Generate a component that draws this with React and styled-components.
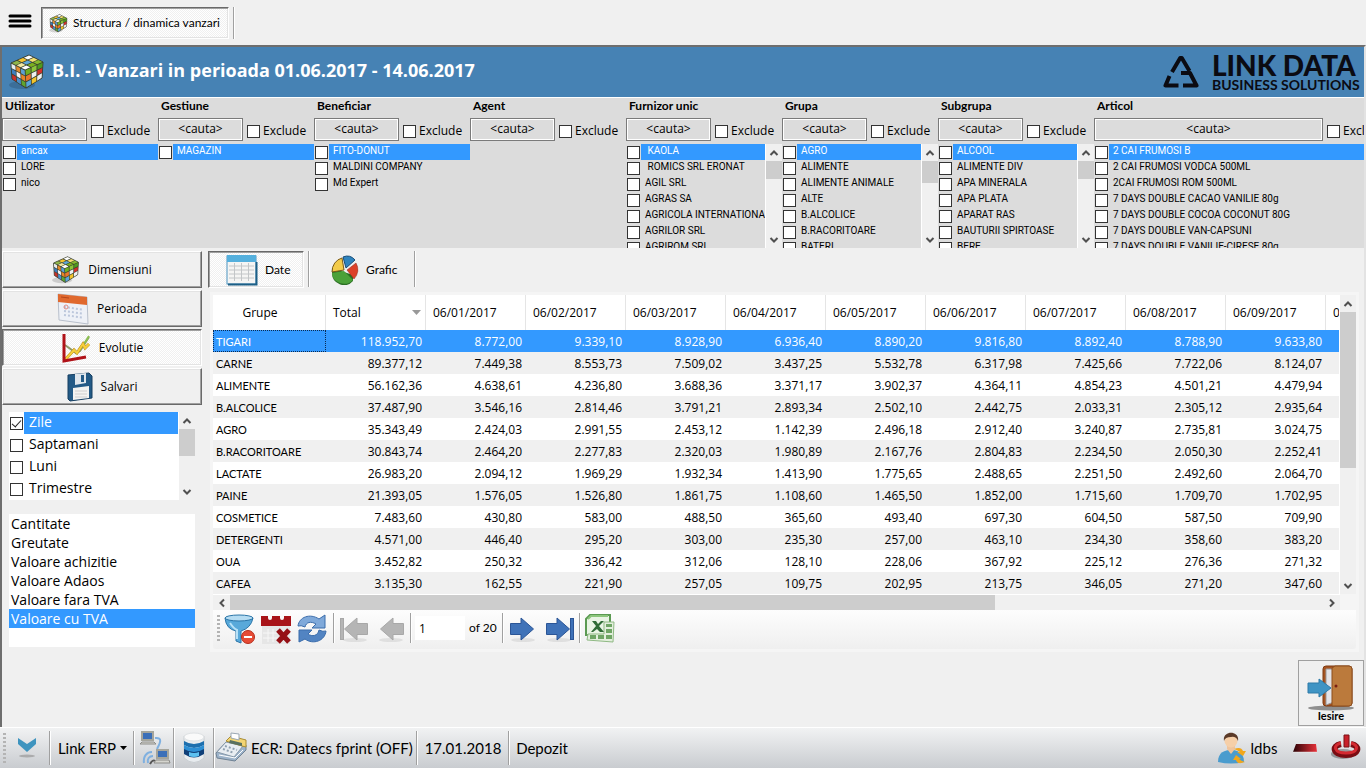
import React from "react";
import styled, { createGlobalStyle, css } from "styled-components";

const humanist = '"Lato", "Open Sans", sans-serif';
const wide = '"Open Sans", "Noto Sans", sans-serif';
const compact = '"Roboto", "Lato", sans-serif';

const GlobalStyle = createGlobalStyle`
  * { box-sizing: border-box; }
  body { margin: 0; background: #f0f0f0; color: #000; font-family: ${wide}; font-size: 12px; }
  button, input { font: inherit; color: inherit; }
  ul { list-style: none; margin: 0; padding: 0; }
  svg { display: block; flex: none; }
`;

const dither = "repeating-conic-gradient(#ffffff 0 25%, #f0f0f0 0 50%) 0 0 / 2px 2px";

const Page = styled.div`
  display: flex;
  flex-direction: column;
  height: 100vh;
  min-height: 640px;
  overflow: hidden;
`;

/* ---------- window tabs ---------- */
const TopBar = styled.nav`
  display: flex;
  align-items: flex-start;
  height: 45px;
  padding: 7px 8px;
`;
const MenuButton = styled.button`
  width: 33px;
  height: 28px;
  padding: 0;
  border: 0;
  background: none;
`;
const Sunken = css`
  background: ${dither};
  border: 1px solid #696969;
  border-right-color: #fff;
  border-bottom-color: #fff;
  box-shadow: inset 1px 1px 0 #a0a0a0, inset -1px -1px 0 #e3e3e3;
`;
const WindowTab = styled.button`
  ${Sunken}
  display: flex;
  align-items: center;
  gap: 5px;
  width: 188px;
  height: 32px;
  padding: 0 0 0 7px;
  font: 12px/16px ${humanist};
  white-space: nowrap;
`;
const Divider = styled.span`
  width: 2px;
  height: ${(p) => p.$h || 32}px;
  margin: 0 ${(p) => p.$gap || 0}px;
  flex: none;
  background: linear-gradient(90deg, #a0a0a0 50%, #fff 50%);
`;

/* ---------- main window ---------- */
const Window = styled.main`
  flex: 1;
  min-height: 0;
  display: flex;
  flex-direction: column;
  border: solid #6e6e6e;
  border-width: 2px 0 0 2px;
  border-right: 2px solid #e3e3e3;
`;
const Banner = styled.header`
  display: flex;
  align-items: center;
  height: 51px;
  flex: none;
  padding: 0 0 0 7px;
  background: #4682b4;
  border-bottom: 1px solid #fff;
  color: #fff;
`;
const Title = styled.h1`
  flex: 1;
  margin: 0 0 4px 7px;
  font: bold 18px/26px ${wide};
`;
const Brand = styled.div`
  display: flex;
  align-items: center;
  gap: 13px;
  color: #0b0b12;
  font-family: Lato, sans-serif;
  white-space: nowrap;
`;
const BrandText = styled.div`
  width: 152px;
`;
const BrandName = styled.div`
  font-size: 28px;
  line-height: 26px;
  font-weight: 900;
`;
const BrandSub = styled.div`
  font-size: 14px;
  line-height: 14px;
  font-weight: 700;
`;

const Filters = styled.section`
  display: flex;
  flex: none;
  height: 150px;
  overflow: hidden;
  background: #dcdcdc;
`;
const FilterColumn = styled.div`
  flex: ${(p) => (p.$last ? "1 0 300px" : "0 0 156px")};
  display: flex;
  flex-direction: column;
  min-width: 0;
`;
const FilterTitle = styled.h2`
  margin: 0;
  padding-left: 3px;
  font: bold 12px/16px ${humanist};
  height: 20px;
`;
const FilterTools = styled.div`
  display: flex;
  align-items: flex-start;
  height: 26px;
`;
const SearchButton = styled.button`
  flex: ${(p) => (p.$last ? "0 0 229px" : "0 0 85px")};
  height: 23px;
  padding: 0 0 2px;
  border: 1px solid #7a7a7a;
  background: #dcdcdc;
  box-shadow: inset 0 0 0 1px #fff;
  font-size: 12px;
  line-height: 16px;
`;
const ExcludeLabel = styled.label`
  display: flex;
  align-items: center;
  gap: 3px;
  height: 14px;
  margin: 6px 0 0 4px;
  font-size: 12px;
  line-height: 14px;
`;
const Check = styled.input.attrs({ type: "checkbox" })`
  appearance: none;
  flex: none;
  position: relative;
  width: 13px;
  height: 13px;
  margin: 0;
  border: 1px solid #333;
  background: #fff;
  &:checked::after {
    content: "";
    position: absolute;
    left: 3px;
    top: 0;
    width: 4px;
    height: 8px;
    border: solid #222;
    border-width: 0 1px 1px 0;
    transform: rotate(42deg);
  }
`;
const ListFrame = styled.div`
  display: flex;
  flex: 1;
  min-height: 0;
`;
const CheckList = styled.ul`
  flex: 1;
  min-width: 0;
  overflow: hidden;
`;
const CheckRow = styled.label`
  display: flex;
  align-items: center;
  gap: 1px;
  padding-left: 1px;
  height: ${(p) => (p.$big ? 22 : 16)}px;
`;
const CheckText = styled.span`
  flex: 1;
  height: 100%;
  padding-left: ${(p) => (p.$big ? 5 : 4)}px;
  overflow: hidden;
  white-space: pre;
  font-family: ${(p) => (p.$big ? wide : compact)};
  font-size: ${(p) => (p.$big ? 14 : 10)}px;
  line-height: ${(p) => (p.$big ? 20 : 14)}px;
  ${(p) => p.$on && "background: #3399ff; color: #fff;"}
`;

/* ---------- scroll bars ---------- */
const Bar = styled.div`
  display: flex;
  flex: none;
  flex-direction: ${(p) => (p.$row ? "row" : "column")};
  ${(p) => (p.$row ? "height: 16px; margin-right: 16px;" : "width: 17px;")}
  background: #f0f0f0;
  border: solid #fff;
  border-width: ${(p) => (p.$row ? "1px 0 0 0" : "0 0 0 1px")};
`;
const BarButton = styled.button`
  display: flex;
  align-items: center;
  justify-content: center;
  flex: 0 0 17px;
  padding: 0;
  border: 0;
  background: none;
`;
const Track = styled.div`
  flex: 1;
  min-height: 0;
`;
const Thumb = styled.div`
  background: #cdcdcd;
  ${(p) => (p.$row ? css`height: 100%; width: ${p.$size};` : css`width: 100%; height: ${p.$size};`)}
`;

/* ---------- work area ---------- */
const WorkArea = styled.div`
  display: flex;
  flex: 1;
  min-height: 0;
  padding: 3px 5px 0 0;
`;
const Sidebar = styled.aside`
  flex: 0 0 200px;
  display: flex;
  flex-direction: column;
  gap: 2px;
`;
const SideButton = styled.button`
  display: flex;
  align-items: center;
  justify-content: center;
  gap: 8px;
  flex: none;
  height: 37px;
  padding: 0;
  background: #f0f0f0;
  border: 1px solid #fff;
  border-right-color: #696969;
  border-bottom-color: #696969;
  box-shadow: inset -1px -1px 0 #a0a0a0, inset 1px 1px 0 #e3e3e3;
  font-size: 12px;
  ${(p) => p.$on && Sunken}
`;
const PeriodBox = styled(ListFrame)`
  flex: none;
  height: 88px;
  margin: 5px 7px 0;
  background: #fff;
`;
const MeasureList = styled.ul`
  flex: none;
  height: 133px;
  margin: 12px 7px 0;
  background: #fff;
`;
const Measure = styled.li`
  padding-left: 2px;
  font-size: 14px;
  line-height: 19px;
  ${(p) => p.$on && "background: #3399ff; color: #fff;"}
`;
const Content = styled.section`
  flex: 1;
  min-width: 0;
  display: flex;
  flex-direction: column;
  margin-left: 6px;
`;
const ViewTabs = styled.div`
  display: flex;
  flex: none;
  height: 37px;
`;
const ViewTab = styled.button`
  display: flex;
  align-items: center;
  gap: 7px;
  width: ${(p) => (p.$on ? 96 : 100)}px;
  height: 37px;
  padding: 1px 0 0 17px;
  border: 0;
  background: none;
  font: 12px/16px ${humanist};
  ${(p) => p.$on && Sunken}
`;
const Panel = styled.div`
  flex: 1;
  min-height: 0;
  display: flex;
  flex-direction: column;
  margin: 4px 0 0 2px;
  padding: 3px;
  background: #f5f5f5;
`;
const GridArea = styled.div`
  display: flex;
  flex: 1;
  min-height: 0;
`;
const GridView = styled.div`
  flex: 1;
  min-width: 0;
  overflow: hidden;
`;
const Table = styled.table`
  table-layout: fixed;
  width: 1213px;
  border-collapse: separate;
  border-spacing: 0;
  font-size: 12px;
`;
const HeadCell = styled.th`
  height: 35px;
  padding: ${(p) => (p.$first ? "0 18px 0 0" : p.$sorted ? "0 4px 0 7px" : "0 7px")};
  width: ${(p) => (p.$first ? 113 : 100)}px;
  background: #fff;
  border-right: 1px solid #e5e5e5;
  font-weight: 400;
  text-align: ${(p) => (p.$first ? "center" : "left")};
  white-space: nowrap;
`;
const HeadInner = styled.span`
  display: flex;
  align-items: center;
  justify-content: space-between;
`;
const Cell = styled.td`
  height: 22px;
  padding: 2px 4px 0 3px;
  line-height: 16px;
  text-align: right;
`;
const NameCell = styled.th`
  height: 22px;
  padding: 2px 3px 0;
  line-height: 16px;
  text-align: left;
  font-weight: 400;
  font-family: ${humanist};
  font-size: 11px;
  white-space: nowrap;
  ${(p) => p.$on && "outline: 1px dotted #0a2a50; outline-offset: -1px;"}
`;
const Row = styled.tr`
  background: #fff;
  &:nth-child(even) { background: #f0f0f0; }
  ${(p) => p.$on && "background: #3399ff; color: #fff;"}
`;
const Pager = styled.div`
  display: flex;
  align-items: flex-start;
  flex: none;
  height: 39px;
  padding: 3px 0 0 4px;
  background: linear-gradient(#fdfdfd, #efefef);
  border-radius: 0 0 3px 3px;
`;
const Grip = styled.span`
  width: 3px;
  height: ${(p) => p.$h}px;
  margin: 2px 2px 0 0;
  background: repeating-linear-gradient(#b4b4b4 0 2px, transparent 2px 4px);
`;
const ToolButton = styled.button`
  display: flex;
  align-items: center;
  justify-content: center;
  width: ${(p) => p.$w || 36}px;
  height: 32px;
  padding: 0;
  border: 0;
  background: none;
`;
const PageInput = styled.input`
  width: 50px;
  height: 24px;
  margin: 3px 0 0 3px;
  padding: 0 0 0 4px;
  border: 0;
  background: #fff;
  font-size: 12px;
`;
const PageCount = styled.span`
  width: 33px;
  margin-left: 4px;
  font: 12px/30px ${humanist};
  white-space: nowrap;
`;
const Actions = styled.footer`
  display: flex;
  justify-content: flex-end;
  flex: none;
  padding: 8px 0 1px;
`;
const ExitButton = styled.button`
  display: flex;
  flex-direction: column;
  align-items: center;
  width: 66px;
  height: 66px;
  padding: 4px 0 0;
  border: 1px solid #a0a0a0;
  background: #f0f0f0;
  font: bold 11px/10px ${humanist};
`;

/* ---------- status bar ---------- */
const StatusBar = styled.div`
  display: flex;
  align-items: center;
  flex: none;
  height: 41px;
  padding: 0 5px 0 3px;
  border-top: 1px solid #fff;
  background: linear-gradient(#f1f2f3, #c9ccd0);
  font: 15px/20px ${humanist};
  white-space: nowrap;
`;
const StatusItem = styled.span`
  display: flex;
  align-items: center;
  justify-content: ${(p) => (p.$start ? "flex-start" : "center")};
  gap: 4px;
  width: ${(p) => p.$w}px;
`;
const StatusButton = styled(StatusItem).attrs({ as: "button", type: "button" })`
  height: 36px;
  padding: 0;
  border: 0;
  background: none;
`;
const Spacer = styled.span`
  flex: 1;
`;

/* ---------- drawings ---------- */
const lerp = (a, b, t) => [a[0] + (b[0] - a[0]) * t, a[1] + (b[1] - a[1]) * t];
const faces = [
  { o: [2, 9], u: [16, 16], v: [20, 1], full: [34, 8], c: ["#8fb54a", "#f2e7a0", "#fff", "#f4c430", "#5fa8d8", "#7ab020", "#fff", "#f3e070", "#86b92c"] },
  { o: [2, 9], u: [16, 16], v: [3, 25], full: [17, 34], c: ["#e9edf0", "#e58a2c", "#5d9fd4", "#3f7fc0", "#f2f2f2", "#e98427", "#c9312b", "#4a90cf", "#5fa530"] },
  { o: [16, 16], u: [34, 8], v: [17, 34], full: [33, 24], c: ["#6fae22", "#8cc63a", "#4e9a1e", "#e8762b", "#eef0f0", "#d3302a", "#5aa5dc", "#f3c52c", "#f0f0f0"] },
];
const Cube = ({ size }) => (
  <svg width={size} height={size} viewBox="0 0 36 36" aria-hidden="true">
    <ellipse cx="13" cy="31" rx="13" ry="4" fill="#000" opacity=".15" />
    <path d="M20 1L34 8L33 24L17 34L3 25L2 9Z" fill="#3a4030" stroke="#3a4030" strokeLinejoin="round" />
    {faces.map((f, k) =>
      f.c.map((col, i) => {
        const at = (s, t) => lerp(lerp(f.o, f.u, s), lerp(f.v, f.full, s), t);
        const s = (i % 3) / 3;
        const t = Math.floor(i / 3) / 3;
        const pts = [at(s + 0.03, t + 0.03), at(s + 0.31, t + 0.03), at(s + 0.31, t + 0.31), at(s + 0.03, t + 0.31)];
        return <polygon key={k + "-" + i} points={pts.map((p) => p.join(",")).join(" ")} fill={col} />;
      })
    )}
  </svg>
);
const MenuIcon = () => (
  <svg width="24" height="16" viewBox="0 0 24 16" aria-hidden="true">
    <path d="M2 3h20M2 8h20M2 13h20" stroke="#000" strokeWidth="3" strokeLinecap="round" />
  </svg>
);
const LogoMark = () => (
  <svg width="36" height="34" viewBox="0 0 36 34" aria-hidden="true" fill="none" stroke="#0b0b12" strokeWidth="4" strokeLinejoin="round">
    <path d="M9 17L17.200 3H18.800L26.500 16" />
    <path d="M18 18H27L33.500 30.500H20" />
    <path d="M6.500 21L2.500 30.500H15.500" />
  </svg>
);
const Chevron = ({ dir }) => (
  <svg width="10" height="10" viewBox="0 0 10 10" aria-hidden="true" style={{ transform: `rotate(${dir}deg)` }}>
    <path d="M1.500 7L5 3.500L8.500 7" fill="none" stroke="#505050" strokeWidth="2" />
  </svg>
);
const PeriodIcon = () => (
  <svg width="32" height="32" viewBox="0 0 32 32" aria-hidden="true">
    <path d="M1 1L30 4L31 31L2 27Z" fill="#eef1f7" stroke="#b9c0cc" />
    <path d="M1 1L30 4V12L1 9Z" fill="#e0692e" />
    <path d="M4 4L12 5" stroke="#b5461a" />
    <path d="M7 14L25 16.500M7 18L25 20.500M7 22L25 24.500" stroke="#bcc7dc" strokeWidth="2" strokeDasharray="2 2" />
    <circle cx="9" cy="14" r="2" fill="none" stroke="#e08a80" />
  </svg>
);
const TrendIcon = () => (
  <svg width="30" height="30" viewBox="0 0 30 30" aria-hidden="true" fill="none">
    <path d="M4 12L15 20L19 18L28 4" stroke="#8f9a68" strokeWidth="2" />
    <path d="M19 17L28 3" stroke="#8cc152" strokeWidth="2" />
    <path d="M4 27L13 17L16 20L22 11L24 15L28 11" stroke="#b98c1c" strokeWidth="3" />
    <path d="M4 27L13 17L16 20L22 11L24 15L28 11" stroke="#f6cf3c" strokeWidth="2" />
    <path d="M3 1V28L25 24" stroke="#b01218" strokeWidth="3" />
  </svg>
);
const DiskIcon = () => (
  <svg width="26" height="30" viewBox="0 0 26 30" aria-hidden="true">
    <path d="M1 3L22 1L25 4V26L3 29L1 27Z" fill="#235a86" stroke="#173f61" />
    <path d="M8 2L19 1V11L8 13Z" fill="#dfe6ec" />
    <path d="M14 3L17 3V10L14 10Z" fill="#235a86" />
    <path d="M6 16L22 14V26L6 28Z" fill="#f3f3f1" />
    <path d="M8 19h12M8 22h12M8 25h12" stroke="#cfcfcf" />
  </svg>
);
const SheetIcon = () => (
  <svg width="32" height="32" viewBox="0 0 32 32" aria-hidden="true">
    <rect x="1" y="2" width="29" height="28" fill="#f5f5f4" stroke="#4d94c0" />
    <rect x="1" y="1" width="29" height="7" fill="#55b0dd" />
    <path d="M3 12h25M3 16h25M3 20h25M3 24h25M8.500 9v18M15.500 9v18M22.500 9v18" stroke="#c3c6c8" />
    <path d="M30.500 8V30.500H2" stroke="#1d5f86" strokeWidth="2" fill="none" />
  </svg>
);
const PieIcon = () => (
  <svg width="28" height="30" viewBox="0 0 28 30" aria-hidden="true">
    <path d="M1 13V18A12 12 0 0 0 22 26V20Z" fill="#2b6e24" />
    <path d="M13 15L1 17A13 14 0 0 1 11 3Z" fill="#f3cb49" stroke="#7a5a18" />
    <path d="M13 16L1 18A12 11 0 0 0 22 25Z" fill="#4ba139" />
    <path d="M16 15L25 8A13 13 0 0 1 23 24Z" fill="#dc4129" stroke="#8e2416" strokeWidth=".5" />
    <path d="M15 13L12 2Q19 -1 24 5Z" fill="#2f83bd" stroke="#174d78" />
  </svg>
);
const SortArrow = () => (
  <svg width="9" height="5" viewBox="0 0 9 5" aria-hidden="true"><path d="M0 0H9L4.500 5Z" fill="#999" /></svg>
);
const FilterOffIcon = () => (
  <svg width="32" height="32" viewBox="0 0 32 32" aria-hidden="true">
    <path d="M1 5Q2 16 12 18V28L17 30V18Q27 15 29 5Z" fill="#58a9da" stroke="#2a75a8" />
    <path d="M6 10Q10 16 13 17V26" stroke="#b7e1f7" strokeWidth="2" fill="none" />
    <ellipse cx="15" cy="5" rx="14" ry="3" fill="#b5dcf2" stroke="#2a75a8" />
    <circle cx="24" cy="24" r="6.500" fill="#e64b35" stroke="#b52d1c" />
    <rect x="20" y="23" width="8" height="2" fill="#fff" />
  </svg>
);
const CalendarRemoveIcon = () => (
  <svg width="32" height="32" viewBox="0 0 32 32" aria-hidden="true">
    <path d="M2 12H30V31H2Z" fill="#e6e6e6" />
    <path d="M1 3H8V5A2 2 0 0 0 12 5V3H20V5A2 2 0 0 0 24 5V3H31V13H1Z" fill="#a81318" />
    <path d="M8 16v13M13 16v13M3 20h15M3 25h15" stroke="#f7f7f7" />
    <path d="M18 17L29 29M29 17L18 29" stroke="#951015" strokeWidth="5" />
  </svg>
);
const RefreshIcon = () => (
  <svg width="30" height="30" viewBox="0 0 30 30" aria-hidden="true" stroke="#3a6cab" strokeLinejoin="round">
    <path d="M1 12C2 3 13 -1 22 5L28 1V14H15L19 10C14 7 9 8 8 13Q4 11 1 12Z" fill="#7fa9da" />
    <path d="M29 17C28 27 16 31 8 25L2 28V16H15L11 20C15 23 21 22 22 16Q26 18 29 17Z" fill="#5284c2" />
  </svg>
);
const Arrow = ({ left, bar, color, edge }) => (
  <svg width="30" height="28" viewBox="0 0 30 28" aria-hidden="true" style={{ transform: left ? "scaleX(-1)" : "none" }}>
    <ellipse cx="14" cy="25" rx="12" ry="2" fill="#000" opacity=".08" />
    <path d="M1.500 8.500H12V3L24.500 14L12 25V19.500H1.500Z" fill={color} stroke={edge} />
    {bar && <rect x="25.500" y="3.500" width="3" height="21" fill={color} stroke={edge} />}
  </svg>
);
const ExcelIcon = () => (
  <svg width="32" height="32" viewBox="0 0 32 32" aria-hidden="true">
    <path d="M6 2H26V22H2V6Z" fill="#e9f4e4" stroke="#5b9a52" strokeWidth="2" />
    <path d="M4 6L7 3H24" stroke="#8cc67c" strokeWidth="2" fill="none" />
    <path d="M4 21H20V9H30L29 29L3 27Z" fill="#e3efdd" stroke="#8fb984" />
    <path d="M22 11h6v3h-6zM22 16h6v4h-6zM22 22h6v4h-6zM14 22h6v4h-6zM6 22h6v4h-6z" fill="#6fa565" />
    <path d="M8 8h4l2 3 3-3h3l-5 5 5 6h-4l-3-3-4 3H7l5-6z" fill="#2f6b35" />
  </svg>
);
const DoorIcon = () => (
  <svg width="48" height="46" viewBox="0 0 48 46" aria-hidden="true">
    <ellipse cx="24" cy="43" rx="23" ry="2.500" fill="#777" opacity=".8" />
    <rect x="16" y="1" width="29" height="40" rx="3" fill="#a65422" stroke="#7d3a12" />
    <path d="M19 4H27V37L19 40Z" fill="#e3e3e8" stroke="#999" />
    <path d="M25 3L28 1H42Q45 1 45 4V38Q45 41 42 41H25Z" fill="#bb7a3c" stroke="#8c4c1b" />
    <circle cx="29" cy="21" r="1.500" fill="#7a1f10" />
    <path d="M1 18H12V14L24 23L12 32V28H1Z" fill="#3f94c4" stroke="#2f7ba8" />
  </svg>
);
const DownIcon = () => (
  <svg width="20" height="22" viewBox="0 0 20 22" aria-hidden="true">
    <ellipse cx="10" cy="19" rx="8" ry="1.500" fill="#999" opacity=".7" />
    <path d="M1 1L10 7L19 1V7L10 15L1 7Z" fill="#3e94bf" />
  </svg>
);
const NetworkIcon = () => (
  <svg width="32" height="36" viewBox="0 0 32 36" aria-hidden="true">
    <path d="M16 8C25 7 20 15 18 19M5 33C4 26 8 22 13 22M9 33C8 29 10 26 14 26" fill="none" stroke="#7fb0e0" strokeWidth="2" />
    <path d="M11 34q3 -5 5 -3" fill="none" stroke="#555" strokeWidth="2" />
    <rect x="3" y="2" width="11" height="8" fill="#3b6fb8" stroke="#a5a59c" strokeWidth="2" />
    <path d="M3 12H15L17 14H1Z" fill="#d5d5cf" stroke="#8c8c88" />
    <rect x="18" y="20" width="11" height="8" fill="#3b6fb8" stroke="#a5a59c" strokeWidth="2" />
    <path d="M17 30H30L31 33H15Z" fill="#d5d5cf" stroke="#8c8c88" />
  </svg>
);
const DatabaseIcon = () => (
  <svg width="22" height="32" viewBox="0 0 22 32" aria-hidden="true">
    <path d="M1 4V26Q11 35 21 26V4Z" fill="#e8ecef" stroke="#c9ced2" />
    <path d="M1 9Q11 15 21 9V13Q11 19 1 13Z" fill="#1d6fae" />
    <path d="M1 13Q11 19 21 13V19Q11 25 1 19Z" fill="#2d8fd4" />
    <path d="M1 17Q11 23 21 17V22Q11 29 1 22Z" fill="#0f3f78" />
    <path d="M6 20Q11 22 16 20V24Q11 26 6 24Z" fill="#5cc0f0" />
    <ellipse cx="11" cy="5" rx="10" ry="4" fill="#fafafa" stroke="#dfe2e4" />
  </svg>
);
const RegisterIcon = () => (
  <svg width="32" height="32" viewBox="0 0 32 32" aria-hidden="true">
    <path d="M1 21L11 10L31 13V18L20 29L2 26Z" fill="#9db3ca" stroke="#6f8294" />
    <path d="M2 20L11 10L28 14L19 25Z" fill="#e8edf2" stroke="#8698a9" />
    <path d="M11 9L16 4L31 8V15L27 14Z" fill="#f3d573" stroke="#a98d35" />
    <path d="M15 8L27 11V14L14 11Z" fill="#587060" />
    <path d="M10 14L22 18M8 17L19 21" stroke="#8fa0b0" strokeWidth="2" strokeDasharray="2 2" />
    <path d="M16 6V1L24 2V8Z" fill="#fff" stroke="#9aa7b3" />
    <path d="M4 23L20 26L28 18" fill="none" stroke="#fff" />
  </svg>
);
const UserIcon = () => (
  <svg width="30" height="32" viewBox="0 0 30 32" aria-hidden="true">
    <path d="M1 30C1 20 8 18 14 18S27 20 27 30Q14 33 1 30Z" fill="#4a9cce" />
    <path d="M10 17L14 22L18 17V14H10Z" fill="#f0c49c" />
    <circle cx="14" cy="9" r="6.500" fill="#f6cfa8" />
    <path d="M7 9C5 -2 23 -2 21 9Q19 4 14 5Q8 5 7 9Z" fill="#5b3a28" />
    <path d="M17 17Q24 14 26 19H29L26 24L20 20H23Q20 18 17 17Z" fill="#f2a71b" />
    <path d="M28 30Q20 33 19 28H16L19 23L24 27H22Q24 29 28 30Z" fill="#f2a71b" />
  </svg>
);
const MinimizeIcon = () => (
  <svg width="26" height="12" viewBox="0 0 26 12" aria-hidden="true">
    <defs>
      <linearGradient id="bar"><stop offset="0" stopColor="#2a0205" /><stop offset="1" stopColor="#e8323a" /></linearGradient>
    </defs>
    <path d="M4 2H24L25 10H1Z" fill="url(#bar)" />
    <path d="M1 10H25" stroke="#fff" opacity=".4" />
  </svg>
);
const PowerIcon = () => (
  <svg width="30" height="28" viewBox="0 0 30 28" aria-hidden="true">
    <ellipse cx="12" cy="20" rx="12" ry="5" fill="#000" opacity=".3" />
    <path d="M10 10C0 12 2 21 15 21S30 12 20 10" fill="none" stroke="#7a0d13" strokeWidth="6" />
    <path d="M10 9C1 11 3 19 15 19S29 11 20 9" fill="none" stroke="#d42a31" strokeWidth="3" />
    <path d="M13 1H18V13H13Z" fill="#c8202a" stroke="#7a1015" />
  </svg>
);
const MenuArrow = () => (
  <svg width="7" height="4" viewBox="0 0 7 4" aria-hidden="true"><path d="M0 0H7L3.500 4Z" fill="#000" /></svg>
);

/* ---------- data ---------- */
const filters = [
  { name: "Utilizator", items: ["ancax", "LORE", "nico"] },
  { name: "Gestiune", items: ["MAGAZIN"] },
  { name: "Beneficiar", items: ["FITO-DONUT", "MALDINI COMPANY", "Md Expert"] },
  { name: "Agent", items: [] },
  { name: "Furnizor unic", scroll: "26%", items: [" KAOLA", " ROMICS SRL ERONAT", "AGIL SRL", "AGRAS SA", "AGRICOLA INTERNATIONAL", "AGRILOR SRL", "AGRIROM SRL"] },
  { name: "Grupa", scroll: "32%", items: ["AGRO", "ALIMENTE", "ALIMENTE ANIMALE", "ALTE", "B.ALCOLICE", "B.RACORITOARE", "BATERI"] },
  { name: "Subgrupa", scroll: "26%", items: ["ALCOOL", "ALIMENTE DIV", "APA MINERALA", "APA PLATA", "APARAT RAS", "BAUTURII SPIRTOASE", "BERE"] },
  { name: "Articol", last: true, items: ["2 CAI FRUMOSI B", "2 CAI FRUMOSI VODCA 500ML", "2CAI FRUMOSI ROM 500ML", "7 DAYS DOUBLE CACAO VANILIE 80g", "7 DAYS DOUBLE COCOA COCONUT 80G", "7 DAYS DOUBLE VAN-CAPSUNI", "7 DAYS DOUBLE VANILIE-CIRESE 80g"] },
];
const days = ["01", "02", "03", "04", "05", "06", "07", "08", "09", "10"].map((d) => `06/${d}/2017`);
const rows = [
  "TIGARI 118.952,70 8.772,00 9.339,10 8.928,90 6.936,40 8.890,20 9.816,80 8.892,40 8.788,90 9.633,80",
  "CARNE 89.377,12 7.449,38 8.553,73 7.509,02 3.437,25 5.532,78 6.317,98 7.425,66 7.722,06 8.124,07",
  "ALIMENTE 56.162,36 4.638,61 4.236,80 3.688,36 3.371,17 3.902,37 4.364,11 4.854,23 4.501,21 4.479,94",
  "B.ALCOLICE 37.487,90 3.546,16 2.814,46 3.791,21 2.893,34 2.502,10 2.442,75 2.033,31 2.305,12 2.935,64",
  "AGRO 35.343,49 2.424,03 2.991,55 2.453,12 1.142,39 2.496,18 2.912,40 3.240,87 2.735,81 3.024,75",
  "B.RACORITOARE 30.843,74 2.464,20 2.277,83 2.320,03 1.980,89 2.167,76 2.804,83 2.234,50 2.050,30 2.252,41",
  "LACTATE 26.983,20 2.094,12 1.969,29 1.932,34 1.413,90 1.775,65 2.488,65 2.251,50 2.492,60 2.064,70",
  "PAINE 21.393,05 1.576,05 1.526,80 1.861,75 1.108,60 1.465,50 1.852,00 1.715,60 1.709,70 1.702,95",
  "COSMETICE 7.483,60 430,80 583,00 488,50 365,60 493,40 697,30 604,50 587,50 709,90",
  "DETERGENTI 4.571,00 446,40 295,20 303,00 235,30 257,00 463,10 234,30 358,60 383,20",
  "OUA 3.452,82 250,32 336,42 312,06 128,10 228,06 367,92 225,12 276,36 271,32",
  "CAFEA 3.135,30 162,55 221,90 257,05 109,75 202,95 213,75 346,05 271,20 347,60",
].map((r) => r.split(" "));
const measures = ["Cantitate", "Greutate", "Valoare achizitie", "Valoare Adaos", "Valoare fara TVA", "Valoare cu TVA"];

/* ---------- parts ---------- */
const Scroll = ({ row, size }) => (
  <Bar $row={row}>
    <BarButton aria-label={row ? "Stanga" : "Sus"}><Chevron dir={row ? -90 : 0} /></BarButton>
    <Track><Thumb $row={row} $size={size} /></Track>
    <BarButton aria-label={row ? "Dreapta" : "Jos"}><Chevron dir={row ? 90 : 180} /></BarButton>
  </Bar>
);
const Items = ({ items, big, checked }) => (
  <CheckList>
    {items.map((t, i) => (
      <li key={t}>
        <CheckRow $big={big}>
          <Check defaultChecked={i === checked} />
          <CheckText $big={big} $on={i === 0}>{t}</CheckText>
        </CheckRow>
      </li>
    ))}
  </CheckList>
);
const Filter = ({ name, items, scroll, last }) => (
  <FilterColumn $last={last}>
    <FilterTitle>{name}</FilterTitle>
    <FilterTools>
      <SearchButton $last={last}>&lt;cauta&gt;</SearchButton>
      <ExcludeLabel><Check />Exclude</ExcludeLabel>
    </FilterTools>
    <ListFrame>
      <Items items={items} />
      {scroll && <Scroll size={scroll} />}
    </ListFrame>
  </FilterColumn>
);

export default function App() {
  return (
    <Page>
      <GlobalStyle />
      <TopBar>
        <MenuButton aria-label="Meniu"><MenuIcon /></MenuButton>
        <WindowTab><Cube size={19} />Structura / dinamica vanzari</WindowTab>
        <Divider $gap={4} />
      </TopBar>

      <Window>
        <Banner>
          <Cube size={36} />
          <Title>B.I. - Vanzari in perioada 01.06.2017 - 14.06.2017</Title>
          <Brand>
            <LogoMark />
            <BrandText>
              <BrandName>LINK DATA</BrandName>
              <BrandSub>BUSINESS SOLUTIONS</BrandSub>
            </BrandText>
          </Brand>
        </Banner>

        <Filters>
          {filters.map((f) => <Filter key={f.name} {...f} />)}
        </Filters>

        <WorkArea>
          <Sidebar>
            <SideButton><Cube size={28} />Dimensiuni</SideButton>
            <SideButton><PeriodIcon />Perioada</SideButton>
            <SideButton $on><TrendIcon />Evolutie</SideButton>
            <SideButton><DiskIcon />Salvari</SideButton>
            <PeriodBox>
              <Items big checked={0} items={["Zile", "Saptamani", "Luni", "Trimestre"]} />
              <Scroll size="50%" />
            </PeriodBox>
            <MeasureList role="listbox" aria-label="Valori">
              {measures.map((m, i) => (
                <Measure key={m} role="option" aria-selected={i === 5} $on={i === 5}>{m}</Measure>
              ))}
            </MeasureList>
          </Sidebar>

          <Content>
            <ViewTabs>
              <ViewTab $on><SheetIcon />Date</ViewTab>
              <Divider $h={36} $gap={4} />
              <ViewTab><PieIcon />Grafic</ViewTab>
              <Divider $h={36} />
            </ViewTabs>
            <Panel>
              <GridArea>
                <GridView>
                  <Table>
                    <thead>
                      <tr>
                        <HeadCell $first>Grupe</HeadCell>
                        <HeadCell $sorted><HeadInner>Total<SortArrow /></HeadInner></HeadCell>
                        {days.map((d) => <HeadCell key={d}>{d}</HeadCell>)}
                      </tr>
                    </thead>
                    <tbody>
                      {rows.map(([name, ...values], i) => (
                        <Row key={name} $on={i === 0}>
                          <NameCell scope="row" $on={i === 0}>{name}</NameCell>
                          {values.map((v, j) => <Cell key={j}>{v}</Cell>)}
                          <Cell />
                        </Row>
                      ))}
                    </tbody>
                  </Table>
                </GridView>
                <Scroll size="59%" />
              </GridArea>
              <Scroll row size="70%" />
              <Pager>
                <Grip $h={28} />
                <ToolButton aria-label="Sterge filtru"><FilterOffIcon /></ToolButton>
                <ToolButton aria-label="Sterge perioada"><CalendarRemoveIcon /></ToolButton>
                <ToolButton aria-label="Reincarca"><RefreshIcon /></ToolButton>
                <Divider $h={30} $gap={3} />
                <ToolButton $w={32} aria-label="Prima pagina"><Arrow left bar color="#b5b5b5" edge="#a8a8a8" /></ToolButton>
                <ToolButton $w={40} aria-label="Pagina anterioara"><Arrow left color="#b5b5b5" edge="#a8a8a8" /></ToolButton>
                <Divider $h={30} />
                <PageInput aria-label="Pagina" defaultValue="1" />
                <PageCount>of 20</PageCount>
                <Divider $h={30} />
                <ToolButton $w={40} aria-label="Pagina urmatoare"><Arrow color="#3f72b8" edge="#2b5596" /></ToolButton>
                <ToolButton $w={32} aria-label="Ultima pagina"><Arrow bar color="#3f72b8" edge="#2b5596" /></ToolButton>
                <Divider $h={30} $gap={3} />
                <ToolButton $w={32} aria-label="Export Excel"><ExcelIcon /></ToolButton>
              </Pager>
            </Panel>
          </Content>
        </WorkArea>

        <Actions>
          <ExitButton><DoorIcon />Iesire</ExitButton>
        </Actions>
      </Window>

      <StatusBar>
        <Grip $h={32} />
        <StatusButton $w={38} aria-label="Extinde"><DownIcon /></StatusButton>
        <Divider $h={34} $gap={3} />
        <StatusButton $w={77}>Link ERP <MenuArrow /></StatusButton>
        <Divider $h={34} $gap={2} />
        <StatusButton $w={36} aria-label="Retea"><NetworkIcon /></StatusButton>
        <Divider $h={40} />
        <StatusButton $w={38} aria-label="Baza de date"><DatabaseIcon /></StatusButton>
        <Divider $h={40} />
        <StatusItem $w={201} $start><RegisterIcon />ECR: Datecs fprint (OFF)</StatusItem>
        <Divider $h={34} />
        <StatusItem $w={90}>17.01.2018</StatusItem>
        <Divider $h={34} />
        <StatusItem $w={64}>Depozit</StatusItem>
        <Spacer />
        <StatusButton $w={62}><UserIcon />ldbs</StatusButton>
        <StatusButton $w={53} aria-label="Minimizeaza"><MinimizeIcon /></StatusButton>
        <StatusButton $w={30} aria-label="Inchide"><PowerIcon /></StatusButton>
      </StatusBar>
    </Page>
  );
}
